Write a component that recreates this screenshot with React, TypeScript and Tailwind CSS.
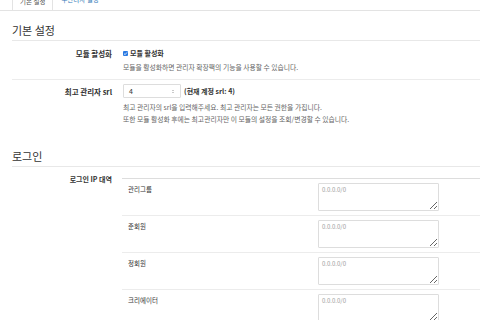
import React from "react";

const groups = ["관리그룹", "준회원", "정회원", "크리에이터"];

export default function App() {
  return (
    <div className="h-[320px] w-[480px] overflow-hidden bg-white font-['Noto_Sans_CJK_KR',sans-serif] text-[6.5px] leading-[1.5] text-[#333]">
      {/* tabs */}
      <div className="flex h-[11px] items-end overflow-hidden border-b border-[#e3e3e3] pl-[12px]">
        <div className="-mb-[1px] flex h-[20px] items-start border border-b-white border-[#e3e3e3] bg-white px-[7px] pt-[5px] text-[6.5px] text-[#555]">
          기본 설정
        </div>
        <div className="flex h-[20px] items-start px-[8px] pt-[5px] text-[6.5px] text-[#337ab7]">
          부관리자 설정
        </div>
      </div>

      <div className="pl-[12px]">
        <h2 className="mt-[12px] border-b border-[#e8e8e8] pb-[3px] text-[11px] leading-[14px] text-[#333]">
          기본 설정
        </h2>

        {/* module on */}
        <div className="flex gap-[11px] border-b border-[#ececec] pt-[7px] pb-[7px]">
          <div className="w-[100px] shrink-0 text-right text-[7.5px] leading-[11px] font-bold">모듈 활성화</div>
          <div>
            <div className="flex items-center gap-[2px] text-[7px] leading-[11px] font-bold">
              <span className="flex h-[5px] w-[5px] items-center justify-center rounded-[1px] bg-[#2a7ae2]">
                <svg viewBox="0 0 10 10" className="h-[5px] w-[5px]">
                  <path d="M2 5.2 4.2 7.3 8 2.8" fill="none" stroke="#fff" strokeWidth="1.6" />
                </svg>
              </span>
              모듈 활성화
            </div>
            <div className="mt-[3px] text-[6.8px] leading-[10px] text-[#666]">
              모듈을 활성화하면 관리자 확장팩의 기능을 사용할 수 있습니다.
            </div>
          </div>
        </div>

        {/* srl */}
        <div className="flex gap-[11px] pt-[4px]">
          <div className="w-[100px] shrink-0 pt-[2px] text-right text-[7.5px] leading-[11px] font-bold">최고 관리자 srl</div>
          <div>
            <div className="flex items-center gap-[3px]">
              <div className="flex h-[14px] w-[58px] items-center justify-between rounded-[1px] border border-[#ddd] px-[5px] text-[7px]">
                <span>4</span>
                <svg viewBox="0 0 6 10" className="h-[5px] w-[4px]">
                  <path d="M1 4 3 2 5 4M1 6 3 8 5 6" fill="none" stroke="#888" strokeWidth="0.9" />
                </svg>
              </div>
              <span className="text-[7px] font-bold">(현재 계정 srl: 4)</span>
            </div>
            <div className="mt-[3px] text-[6.8px] leading-[12px] text-[#666]">
              <div>최고 관리자의 srl을 입력해주세요. 최고 관리자는 모든 권한을 가집니다.</div>
              <div>또한 모듈 활성화 후에는 최고관리자만 이 모듈의 설정을 조회/변경할 수 있습니다.</div>
            </div>
          </div>
        </div>

        <h2 className="mt-[24px] border-b border-[#e8e8e8] pb-[3px] text-[11px] leading-[14px] text-[#333]">
          로그인
        </h2>

        {/* login ip */}
        <div className="flex gap-[10px] pt-[7px]">
          <div className="w-[100px] shrink-0 text-right text-[7px] leading-[11px] font-bold">로그인 IP 대역</div>
          <div className="mt-[4px] flex-1 border-t border-[#ddd]">
            {groups.map((g) => (
              <div key={g} className="flex border-b border-[#ececec] py-[4px]">
                <div className="w-[196px] shrink-0 pt-[2px] pl-[6px] text-[6.5px]">{g}</div>
                <textarea
                  placeholder="0.0.0.0/0"
                  className="h-[28px] w-[121px] rounded-[1px] border border-[#ddd] px-[3px] py-[1px] text-[6px] leading-[9px] placeholder:text-[#999]"
                />
              </div>
            ))}
          </div>
        </div>
      </div>
    </div>
  );
}
